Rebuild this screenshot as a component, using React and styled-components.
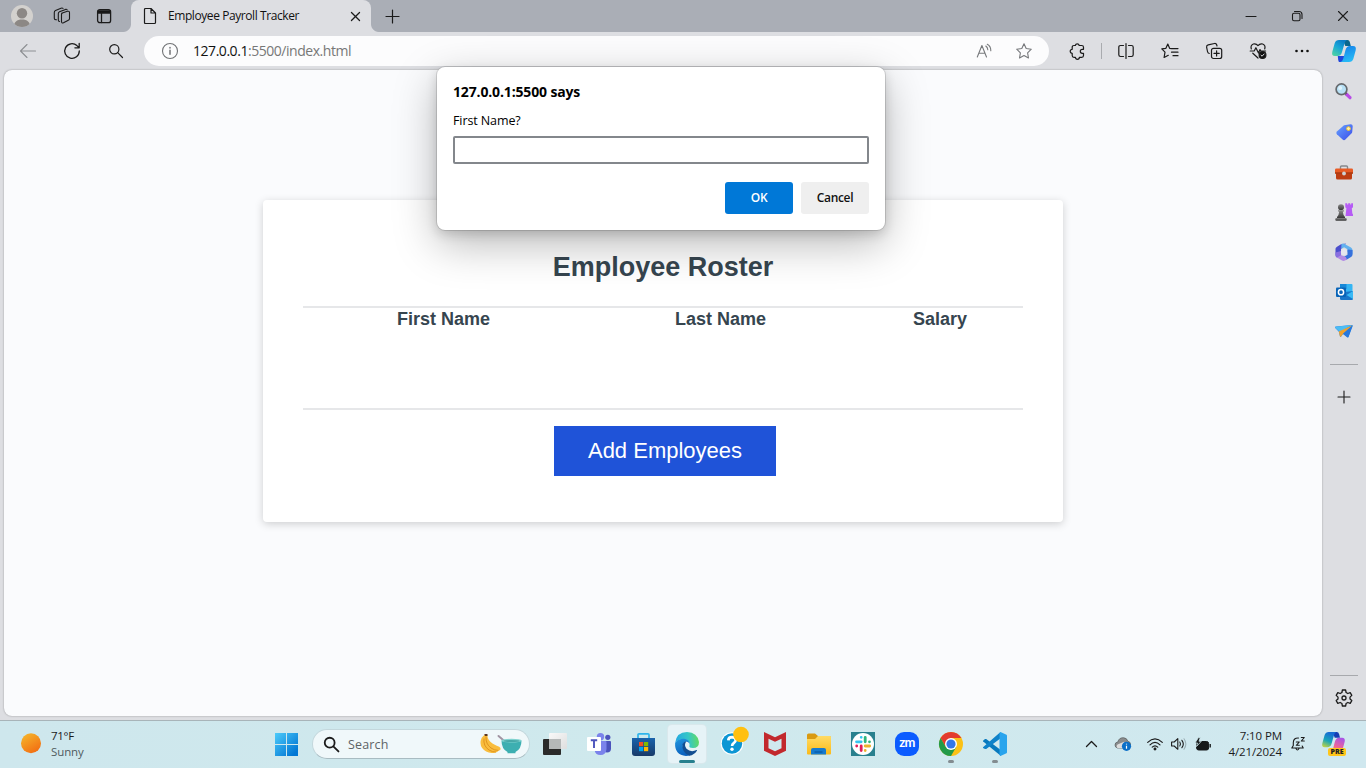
import React from "react";
import styled, { createGlobalStyle, css } from "styled-components";

const GlobalStyle = createGlobalStyle`
  *, *::before, *::after { box-sizing: border-box; }
  body { margin: 0; overflow: hidden; }
  svg { display: block; overflow: visible; }
`;

const ui = `"Open Sans", "Noto Sans", sans-serif`;

const Screen = styled.div`
  width: 1366px;
  height: 768px;
  display: flex;
  flex-direction: column;
  background: #dddee2;
  font-family: ${ui};
  color: #111;
  overflow: hidden;
`;

const Slot = styled.span`
  display: flex;
  flex: none;
  align-items: center;
  justify-content: center;
  width: ${(p) => p.$w || 44}px;
  height: ${(p) => (p.$h ? `${p.$h}px` : "auto")};
`;

const Spacer = styled.span`
  flex: 1;
`;

const Gap = styled.span`
  flex: none;
  width: ${(p) => p.$w || 0}px;
  height: ${(p) => p.$h || 0}px;
`;

/* ---------- tab strip ---------- */

const TabStrip = styled.div`
  display: flex;
  flex: none;
  height: 32px;
  background: #aaaeb6;
`;

const Tab = styled.div`
  position: relative;
  display: flex;
  align-items: center;
  width: 240px;
  height: 32px;
  margin-left: 3px;
  padding: 0 8px 0 13px;
  background: #dddee2;
  border-radius: 8px 8px 0 0;

  &::before,
  &::after {
    content: "";
    position: absolute;
    bottom: 0;
    width: 8px;
    height: 8px;
  }
  &::before {
    left: -8px;
    background: radial-gradient(circle at 0 0, transparent 7.5px, #dddee2 8.5px);
  }
  &::after {
    right: -8px;
    background: radial-gradient(circle at 100% 0, transparent 7.5px, #dddee2 8.5px);
  }
`;

const TabTitle = styled.span`
  flex: 1;
  margin-left: 12px;
  padding-bottom: 1px;
  font-size: 12px;
  letter-spacing: -0.42px;
  white-space: nowrap;
`;

/* ---------- toolbar ---------- */

const Toolbar = styled.div`
  display: flex;
  flex: none;
  height: 38px;
  padding: 0 0 0 6px;
  align-items: stretch;
`;

const AddressBar = styled.div`
  display: flex;
  align-items: center;
  width: 905px;
  height: 30px;
  margin: 4px 6px 0 6px;
  padding: 0 5px 0 14px;
  background: #fcfcfd;
  border-radius: 15px;
`;

const Url = styled.span`
  flex: 1;
  margin-left: 11px;
  padding-bottom: 1px;
  font-size: 14px;
  letter-spacing: -0.46px;
  color: #777;
  b {
    font-weight: 400;
    color: #111;
  }
`;

const ToolDivider = styled.span`
  width: 1px;
  height: 16px;
  margin: 11px 2px 0;
  background: #a9abaf;
`;

/* ---------- page ---------- */

const Body = styled.div`
  display: flex;
  flex: none;
  height: 650px;
  padding-left: 4px;
`;

const Page = styled.main`
  width: 1318px;
  height: 646px;
  padding-top: 130px;
  background: #fafbfd;
  border-radius: 8px;
  box-shadow: 0 0 2px rgba(0, 0, 0, 0.35);
`;

const Card = styled.section`
  display: flex;
  flex-direction: column;
  align-items: center;
  width: 800px;
  height: 322px;
  margin: 0 auto;
  padding: 0 40px;
  background: #fff;
  border-radius: 4px;
  box-shadow: 0 2px 8px rgba(0, 0, 0, 0.18);
  font-family: "Liberation Sans", Arial, sans-serif;
  color: #36454f;
`;

const Heading = styled.h1`
  margin: 51px 0 22px;
  font-size: 27px;
  line-height: 33px;
  font-weight: 700;
`;

const Roster = styled.div`
  display: grid;
  grid-template-columns: 281px 273px 166px;
  width: 720px;
  height: 104px;
  border-top: 2px solid #e6e7e9;
  border-bottom: 2px solid #e6e7e9;
`;

const ColumnTitle = styled.span`
  font-size: 18px;
  line-height: 23px;
  font-weight: 700;
  text-align: center;
`;

const AddButton = styled.button`
  width: 222px;
  height: 50px;
  margin: 16px 0 0 4px;
  padding: 0;
  border: 0;
  background: #1f53d8;
  color: #fff;
  font: 22px "Liberation Sans", Arial, sans-serif;
`;

/* ---------- dialog ---------- */

const Dialog = styled.div`
  position: absolute;
  left: 437px;
  top: 67px;
  width: 448px;
  height: 163px;
  padding: 15px 16px 0;
  background: #fff;
  border-radius: 8px;
  box-shadow: 0 0 0 1px rgba(0, 0, 0, 0.12), 0 14px 44px rgba(0, 0, 0, 0.28), 0 4px 12px rgba(0, 0, 0, 0.16);
  color: #000;
`;

const DialogTitle = styled.div`
  font-size: 14px;
  line-height: 20px;
  font-weight: 700;
  letter-spacing: -0.15px;
`;

const DialogLabel = styled.div`
  margin-top: 9px;
  font-size: 12.5px;
  line-height: 19px;
  letter-spacing: -0.1px;
`;

const PromptInput = styled.input`
  display: block;
  width: 416px;
  height: 28px;
  margin-top: 6px;
  border: 2px solid #83878c;
  border-radius: 2px;
  background: #fff;
  outline: 0;
`;

const DialogActions = styled.div`
  display: flex;
  justify-content: flex-end;
  gap: 8px;
  margin-top: 18px;
`;

const DialogButton = styled.button`
  width: 68px;
  height: 32px;
  padding: 0 0 1px;
  border: 0;
  border-radius: 3px;
  font: 600 12px ${ui};
  letter-spacing: -0.35px;
  background: ${(p) => (p.$primary ? "#0078d7" : "#efefef")};
  color: ${(p) => (p.$primary ? "#fff" : "#111")};
`;

/* ---------- sidebar ---------- */

const Sidebar = styled.aside`
  display: flex;
  flex-direction: column;
  align-items: center;
  width: 44px;
  padding-top: 2px;
`;

const SideDivider = styled.span`
  width: 28px;
  height: 1px;
  background: #a7a9ad;
`;

/* ---------- taskbar ---------- */

const Taskbar = styled.footer`
  display: flex;
  flex: none;
  height: 48px;
  padding-bottom: 1px;
  align-items: center;
  border-top: 1px solid #a8b4b9;
  background: linear-gradient(90deg, #cee7ed, #cfe9ed 50%, #d0e8ef);
`;

const Weather = styled.div`
  display: flex;
  align-items: center;
  width: 262px;
  padding-left: 21px;
`;

const WeatherText = styled.div`
  display: flex;
  flex-direction: column;
  margin-left: 10px;
  font-size: 11.5px;
  line-height: 16px;
  letter-spacing: -0.3px;
  color: #1b1b1b;
  small {
    font-size: 11.5px;
    letter-spacing: -0.1px;
    color: #505a5e;
  }
`;

const SearchBox = styled.div`
  display: flex;
  align-items: center;
  width: 218px;
  height: 30px;
  margin: 0 3px 0 1px;
  padding: 0 7px 0 11px;
  background: #f0f8fa;
  border: 1px solid #c3d7dc;
  border-bottom-color: #a9bcc2;
  border-radius: 15px;
  span {
    flex: 1;
    margin-left: 9px;
    font-size: 12.5px;
    letter-spacing: 0.15px;
    color: #5e6366;
  }
`;

const TaskItem = styled.span`
  position: relative;
  display: flex;
  align-items: center;
  justify-content: center;
  width: 38px;
  height: 38px;
  margin: 0 3px;
  border-radius: 4px;
  ${(p) =>
    p.$active &&
    css`
      background: #e6f3f7;
      box-shadow: 0 0 0 1px #d9e8ec;
    `}
  &::after {
    content: "";
    position: absolute;
    bottom: 0;
    left: 50%;
    width: ${(p) => (p.$active ? 16 : 6)}px;
    height: 3px;
    border-radius: 2px;
    transform: translateX(-50%);
    background: ${(p) => (p.$active ? "#26808e" : p.$running ? "#838c90" : "transparent")};
  }
`;

const Clock = styled.div`
  width: 63px;
  font-size: 11.5px;
  line-height: 16px;
  letter-spacing: -0.1px;
  white-space: nowrap;
  text-align: right;
  color: #1b1b1b;
`;

/* ---------- icons ---------- */

const Line = ({ w = 16, h = w, box, c = "#1b1b1b", s = 1.1, children }) => (
  <svg
    width={w}
    height={h}
    viewBox={box || `0 0 ${w} ${h}`}
    fill="none"
    stroke={c}
    strokeWidth={s}
    strokeLinecap="round"
    strokeLinejoin="round"
  >
    {children}
  </svg>
);

const Avatar = () => (
  <svg width="22" height="22" viewBox="0 0 22 22">
    <clipPath id="av"><circle cx="11" cy="11" r="11" /></clipPath>
    <g clipPath="url(#av)">
      <rect width="22" height="22" fill="#d3d1ce" />
      <circle cx="11" cy="8.2" r="5.2" fill="#8c8885" />
      <path d="M2.8 22c0-5 3-7.6 8.2-7.6s8.2 2.6 8.2 7.6z" fill="#8c8885" />
    </g>
  </svg>
);

const Workspaces = () => (
  <Line w={18}>
    <path d="M8.6 6.2 14.4 4.3Q16.5 3.8 16.5 5.8v5.6q0 1.3-1.2 1.8l-4.8 2.6q-2 .8-2-1.2V7.600q0-1.100 1-1.600z" />
    <path d="M6.600 14.500q-1.300-.1-1.300-1.600V6.700q0-1.400 1.200-1.900l6-2.400q1.200-.3 1.600.4" />
    <path d="M3.500 12.800q-2 .2-2.200-1.400V5.400Q1.300 4 2.500 3.400L8 1.200q1.400-.4 2 .2" />
  </Line>
);

const VerticalTabs = () => (
  <Line w={14} s={1.3}>
    <rect x=".6" y=".6" width="13" height="13" rx="2.200" />
    <path d="M1 1.800h12v2.200H1z" fill="#111" />
    <path d="M4.500 4v9.500" />
  </Line>
);

const FileIcon = () => (
  <Line w={12} h={16} s={1.2}>
    <path d="M.5 1.500q0-1 1-1H7l4.500 4.500v9.500q0 1-1 1h-9q-1 0-1-1zM7 .5V5h4.500" />
  </Line>
);

const Cross = ({ w = 9, s = 1.2 }) => (
  <Line w={w} box="0 0 10 10" s={s}><path d="m.5.5 9 9M9.500.5l-9 9" /></Line>
);

const Plus = ({ w = 13 }) => (
  <Line w={w} box="0 0 13 13" s={1.2}><path d="M6.500 0v13M0 6.500h13" /></Line>
);

const Minimise = () => <Line w={10} s={1.1}><path d="M0 5.500h10" /></Line>;

const Restore = () => (
  <Line w={10} s={1.1}>
    <rect x=".5" y="2.200" width="7.500" height="7.500" rx="1.500" />
    <path d="M2.500.5h4.500q3 0 3 3v4" />
  </Line>
);

const Back = () => <Line w={16} h={14} c="#8d8f93"><path d="M15.500 7H.5M7 .5.500 7 7 13.500" /></Line>;

const Refresh = () => (
  <Line w={16} s={1.3}>
    <path d="M15.300 8a7.300 7.300 0 1 1-2.400-5.400L15 4.600M15.200.5v4.300h-4.300" />
  </Line>
);

const Magnifier = ({ w = 14, s = 1.2 }) => (
  <Line w={w} box="0 0 14 14" s={s}><circle cx="5.300" cy="5.300" r="4.600" /><path d="m8.700 8.700 4.800 4.800" /></Line>
);

const Info = () => (
  <Line w={16} c="#707275"><circle cx="8" cy="8" r="7.500" /><path d="M8 7.300v4M8 4.600v.3" strokeWidth="1.500" /></Line>
);

const ReadAloud = () => (
  <Line w={16} c="#77797c">
    <path d="m1.300 14 4.600-11.500L10.500 14M2.900 10.300h6" />
    <path d="M9.800 3q1.900 1.400 2 3.700M11.300 1.300q3.600 2 3.500 6.500" />
  </Line>
);

const starPath = "m8 .8 2.200 4.700 5.100.7-3.700 3.600.9 5.200L8 12.500 3.500 15l.9-5.200L.7 6.200l5.100-.7z";
const Star = () => <Line w={16} c="#77797c"><path d={starPath} /></Line>;

const Puzzle = () => (
  <Line w={16} s={1.2}>
    <path d="M3.200 4.300q0-1.800 1.800-1.800h1.300a2 2 0 0 1 3.900 0h2.500q1.800 0 1.800 1.800v2h-1.200a2 2 0 0 0 0 4h1.200v2.200q0 1.800-1.800 1.800h-2.300a2 2 0 0 1-4 0H5q-1.800 0-1.800-1.800v-2.200a2 2 0 0 1 0-4z" />
  </Line>
);

const Split = () => (
  <Line w={16} s={1.2}>
    <path d="M8 .5v15M5.500 2.500h-3q-1.700 0-1.700 1.700v7.600q0 1.700 1.700 1.700h3M10.500 2.500h3q1.700 0 1.700 1.700v7.600q0 1.700-1.700 1.700h-3" />
  </Line>
);

const Favourites = () => (
  <Line w={16} s={1.2}>
    <path d="M9.700 5.600 7.600 5.300 5.800 1 3.900 5.300-.2 5.900l3.200 3.200-.9 5.400 4.200-2.200M9.700 5.600H16M9.500 9.200H16M11 12.700h5" />
  </Line>
);

const Collections = () => (
  <Line w={16} s={1.2}>
    <rect x="5.500" y="5.300" width="10.200" height="10.200" rx="2" />
    <path d="M10.600 7.800v5.200M8 10.400h5.200M3.300 10.500Q1.800 10.200 1.500 8.500L.600 4.200Q.400 2.300 2.200 1.800L8.500.5q1.700-.2 2.200 1.300l.3 1.200" />
  </Line>
);

const HeartPulse = () => (
  <Line w={17} h={16} s={1.2}>
    <path d="M1.300 6Q.2 2.200 3.300 1q2.800-.8 4.700 1.600Q10 .2 12.700 1q3.200 1.200 2 5" />
    <path d="M.2 8h4l1.700-3.300L8.500 10l1.500-3.500.8 1.500h4.800M2.800 10.200 8 15" />
    <circle cx="12.500" cy="12" r="3.400" fill="#111" />
    <path d="m11 12.200 1.100 1 2-2.200" stroke="#dddee2" strokeWidth="1" />
  </Line>
);

const Dots = () => (
  <svg width="14" height="4" viewBox="0 0 14 4" fill="#111">
    <circle cx="1.500" cy="2" r="1.300" /><circle cx="7" cy="2" r="1.300" /><circle cx="12.500" cy="2" r="1.300" />
  </svg>
);

const Copilot = () => (
  <svg width="24" height="22" viewBox="0 0 24 22">
    <defs>
      <linearGradient id="cp1" x1="0" y1="1" x2=".6" y2="0"><stop offset="0" stopColor="#55d99b" /><stop offset=".6" stopColor="#17a5d8" /><stop offset="1" stopColor="#0c7dc6" /></linearGradient>
      <linearGradient id="cp2" x1="0" y1="0" x2=".3" y2="1"><stop offset="0" stopColor="#147fe9" /><stop offset="1" stopColor="#27b9f5" /></linearGradient>
    </defs>
    <path d="M11 0h4.500q1.800 0 2.300 2l1 4h-5.500z" fill="#0a668c" />
    <path d="M7 22h4.500l2-6H5.800l.4 3.800Q6.500 21.500 7 22z" fill="#2146db" />
    <path d="M7 0h8q-1.800.6-2.500 3.500L10 12q-1 4-4.500 4H2.800Q-.7 16 .3 11.700l2.400-8.500Q3.800 0 7 0z" fill="url(#cp1)" />
    <path d="M18 6h3q3.600 0 2.700 4.300L21.300 19q-1 3-4.300 3H8.500q2-.5 2.800-3.500L13.500 10Q14.500 6 18 6z" fill="url(#cp2)" />
  </svg>
);

const SideSearch = () => (
  <svg width="18" height="18" viewBox="0 0 18 18">
    <path d="m11.300 11 3.700 3.700" stroke="#b84be6" strokeWidth="3.200" strokeLinecap="round" />
    <path d="m9.800 9.500 1.500 1.500" stroke="#555" strokeWidth="2" />
    <circle cx="6.500" cy="6.300" r="5.400" fill="#b7e0f5" stroke="#66696d" strokeWidth="1.700" />
    <circle cx="5.200" cy="5" r="2" fill="#dff3fc" />
  </svg>
);

const Tag = () => (
  <svg width="17" height="17" viewBox="0 0 17 17">
    <defs><linearGradient id="tg" x1="0" y1="0" x2="1" y2="1"><stop stopColor="#68a4ff" /><stop offset="1" stopColor="#3a4be8" /></linearGradient></defs>
    <path d="M8 1.200 14.500.2q2-.2 2.200 1.700l-.5 6q-.1 1-.8 1.700l-6 6q-1.400 1.300-2.800 0L.9 10.200q-1.300-1.400 0-2.800z" fill="url(#tg)" />
    <circle cx="12.500" cy="4.600" r="1.900" fill="#fff3b0" stroke="#f1c232" strokeWidth="1" />
  </svg>
);

const Toolbox = () => (
  <svg width="18" height="15" viewBox="0 0 18 15">
    <path d="M5.500 4V2q0-1 1-1h5q1 0 1 1v2" fill="none" stroke="#85888c" strokeWidth="1.400" />
    <rect y="3.500" width="18" height="5.500" rx="1.300" fill="#e85b25" />
    <path d="M1 8.500h16V13q0 1.500-1.500 1.500h-13Q1 14.500 1 13z" fill="#bd3d12" />
    <path d="M0 8h18" stroke="#8c2d0b" />
    <circle cx="9" cy="8.500" r="1.900" fill="#cfd2d5" />
  </svg>
);

const Chess = () => (
  <svg width="18" height="18" viewBox="0 0 18 18">
    <defs><linearGradient id="ch" x1="0" y1="0" x2="0" y2="1"><stop stopColor="#888" /><stop offset="1" stopColor="#333" /></linearGradient></defs>
    <path d="M10.300.3h1.900v1.200h1V.3h2v1.200h1V.3H18v4l-1.200 1 .5 5 .7 1.200v1.500h-7.500l.9-7.700-1.100-1z" fill="#b65bf5" />
    <g fill="url(#ch)">
      <circle cx="6" cy="4.300" r="3" />
      <path d="M3 7.300h6v1.300H7.800Q8 12 10 14v1.500H2V14q2-2 2.200-5.400H3z" />
      <rect x=".3" y="15" width="11.400" height="2.800" rx="1" />
    </g>
  </svg>
);

const M365 = () => (
  <svg width="18" height="18" viewBox="0 0 18 18">
    <path d="M6 1.300 11 .5 8.500 4 6 6v6L2 14.500Q.5 13.500.5 12V5.800Q.5 4.500 2 3.700z" fill="#4c4fcc" />
    <path d="M6.500.9q1.500-.9 3 0l6.500 3.700q1.500 1 1.500 2.600v4L12.500 9V6.200L9 4.300 6.200 6z" fill="#62b1ef" />
    <path d="M17.500 7v4.500q0 1.700-1.500 2.600l-4.500 2.700-6-2.800 3.500-.3 3.500-2V6.500z" fill="#3671dc" />
    <path d="M1.500 14.200 5.800 12l5 2 1.200 2.500-2 1q-1.500.8-3 0z" fill="#b28be5" />
    <path d="M.5 9.500 6 8v4.200L2 14.500Q.5 13.500.5 12z" fill="#8a6fe0" />
    <circle cx="9" cy="9" r="3.100" fill="#e6e7ee" />
  </svg>
);

const Outlook = () => (
  <svg width="17" height="16" viewBox="0 0 17 16">
    <rect x="4" width="12.500" height="11" rx="1" fill="#35b5f3" />
    <path d="M4 0h6.500v5H4z" fill="#1688d8" />
    <path d="M4 8.500 17 7v7.700q0 1.300-1.300 1.300H5.300Q4 16 4 14.700z" fill="#1976c9" />
    <path d="M17 7v8l-6.500-4z" fill="#38b9f5" />
    <rect y="3.500" width="10" height="9.500" rx="1" fill="#0864b8" />
    <circle cx="5" cy="8.200" r="2.600" fill="none" stroke="#fff" strokeWidth="1.500" />
  </svg>
);

const Plane = () => (
  <svg width="18" height="14" viewBox="0 0 18 14">
    <path d="M0 2.500Q0 1.500 1 1.400L17 0q1 .1.700 1L13.500 12q-.6 1-1.500.3L8 9l-2 2.700q-.7.500-1-.3L3.800 6.800.3 3z" fill="#2384e8" />
    <path d="M.3 1.700 17 0 5 7 .3 3z" fill="#4cbdf4" />
    <path d="M17.500.3 3.800 6.500 5 11.500q.4.900 1 0L8 9z" fill="#f0a22d" />
    <path d="M17.500.5 8 8.800l4.700 3.500q.5.200.8-.5z" fill="#2878dc" />
  </svg>
);

const Gear = () => (
  <Line w={18} box="0 0 18 18" s={1.3}>
    <path d="M7.400 1h3.200l.5 2.500 1.700 1 2.400-.8 1.600 2.700L15 8.100v1.900l1.800 1.600-1.600 2.700-2.400-.8-1.700 1-.5 2.500H7.400l-.5-2.500-1.700-1-2.400.8-1.600-2.700L3 10V8.100L1.200 6.400l1.600-2.700 2.400.8 1.700-1z" />
    <circle cx="9" cy="9" r="2" />
  </Line>
);

const Sun = () => (
  <svg width="20" height="20" viewBox="0 0 20 20">
    <defs><linearGradient id="sun" x1=".2" y1="0" x2=".8" y2="1"><stop stopColor="#f5b52c" /><stop offset="1" stopColor="#f26a11" /></linearGradient></defs>
    <circle cx="10" cy="9.200" r="10" fill="url(#sun)" />
  </svg>
);

const Windows = () => (
  <svg width="23" height="23" viewBox="0 0 23 23">
    <defs><linearGradient id="win" gradientUnits="userSpaceOnUse" x1="0" y1="0" x2="20" y2="20"><stop stopColor="#4dcbfa" /><stop offset="1" stopColor="#0277d4" /></linearGradient></defs>
    <path fill="url(#win)" d="M0 0h11v11H0zM12 0h11v11H12zM0 12h11v11H0zM12 12h11v11H12z" />
  </svg>
);

const BananaBowl = () => (
  <svg width="42" height="20" viewBox="0 0 42 20">
    <path d="M4.300 1h3q.4 5.500 5.200 8.500 4 2.300 6.700 3.200 2 1.200 1.200 3-.5.800-1.800.7-2 2.600-7 2.600-6-.4-9.500-5-3-4.500-.4-10.300z" fill="#f9bd3d" />
    <path d="M6 2.500q-.5 7.500 5 11.500 3.500 2.500 7.500 2.400M4 4.500q-1 7.500 5 11.500 3.500 2.200 7 2" stroke="#d98914" fill="none" strokeWidth=".8" />
    <path d="M4.300 0h3.200v2H5z" fill="#5c3821" />
    <path d="m18.500 2 7 6" stroke="#a194a3" strokeWidth="2" strokeLinecap="round" />
    <path d="M21.500 6.500h20q0 8.500-6 11.500v1.200h-8V18q-6-3-6-11.500z" fill="#3dafb1" />
    <ellipse cx="31.500" cy="6.700" rx="10" ry="1.900" fill="#81d3d0" />
    <ellipse cx="31.500" cy="7" rx="8" ry="1" fill="#46a8a8" />
  </svg>
);

const TaskView = () => (
  <svg width="24" height="22" viewBox="0 0 24 22">
    <defs><linearGradient id="tv" x1="0" y1="0" x2="1" y2="1"><stop stopColor="#f9f9f9" /><stop offset="1" stopColor="#dedede" /></linearGradient></defs>
    <rect y="6" width="18" height="16" rx="1" fill="#2b2b2a" />
    <rect x="6" width="18" height="16" rx="1" fill="url(#tv)" />
    <path d="M6 6h12v10H6z" fill="#b5b8b8" />
  </svg>
);

const Teams = () => (
  <svg width="24" height="22" viewBox="0 0 24 22">
    <circle cx="20.800" cy="4.300" r="2.600" fill="#4b53bc" />
    <circle cx="13.500" cy="3.700" r="3.700" fill="#7b83eb" />
    <path d="M17 8h6q1 0 1 1v6.500q0 4-4 4-3 0-3-3z" fill="#4b53bc" />
    <path d="M8 8h10.500q1 0 1 1v7q-.5 6-6 6T7.500 16.500z" fill="#7b83eb" />
    <rect y="4" width="14" height="14" rx="1" fill="#fff" />
    <path d="M3.800 7.300h6.400M7 7.300v7.700" stroke="#4b53bc" strokeWidth="1.900" />
  </svg>
);

const Store = () => (
  <svg width="23" height="23" viewBox="0 0 23 23">
    <defs><linearGradient id="st" x1="0" y1="0" x2="0" y2="1"><stop stopColor="#1a63ac" /><stop offset="1" stopColor="#183a68" /></linearGradient></defs>
    <path d="M6 5.500V1.800q0-1 1-1h9q1 0 1 1v3.700" fill="none" stroke="#2fb5ec" strokeWidth="1.700" />
    <path d="M0 5h23v15q0 3-3 3H3q-3 0-3-3z" fill="url(#st)" />
    <path fill="#f25022" d="M7 9h4.200v4.200H7z" /><path fill="#7fba00" d="M12 9h4.200v4.200H12z" />
    <path fill="#00a4ef" d="M7 14h4.200v4.200H7z" /><path fill="#ffb900" d="M12 14h4.200v4.200H12z" />
  </svg>
);

const Edge = () => (
  <svg width="24" height="24" viewBox="0 0 24 24">
    <defs>
      <linearGradient id="eg1" x1="0" y1=".3" x2="1" y2=".2"><stop stopColor="#25a8e2" /><stop offset=".55" stopColor="#35c7c6" /><stop offset="1" stopColor="#65dc5b" /></linearGradient>
      <linearGradient id="eg2" x1="0" y1="0" x2=".3" y2="1"><stop stopColor="#2196df" /><stop offset="1" stopColor="#0b62bf" /></linearGradient>
    </defs>
    <path d="M.1 11Q1.500 0 12 0q10.500.5 12 10 0 6-6 6-4.500 0-3.500-2.500 1-5-5-6.500Q4 6.500.1 11z" fill="url(#eg1)" />
    <path d="M.1 11Q3.500 6.500 9 6.800q5.500.7 5.700 5.200-1-2.500-3.700-2.500-4 1.500-3 6 2 5.500 7 7.800-2 .7-4 .7Q-.5 23 .1 11z" fill="url(#eg2)" />
    <path d="M7.500 12q2-3 4-2.700-3 3.700 0 7.500 4.500 4 10 1.200.8-.2.400.7-2.700 4.200-7.500 5Q6.500 20.500 7.500 12z" fill="#124e91" />
  </svg>
);

const HelpBadge = () => (
  <svg width="28" height="28" viewBox="-4 3 28 28">
    <circle cx="11" cy="16.500" r="11.300" fill="#fff" />
    <circle cx="11" cy="16.500" r="10.200" fill="#0d96d4" />
    <path d="M7.300 13.300q.2-3.200 3.700-3.200 3.700.1 3.700 3 0 1.700-2 3-1.600 1-1.600 2.800" fill="none" stroke="#fff" strokeWidth="2.700" />
    <circle cx="11" cy="22.200" r="1.700" fill="#fff" />
    <circle cx="20" cy="7.500" r="7.800" fill="#ffc010" />
  </svg>
);

const McAfee = () => (
  <svg width="22" height="24" viewBox="0 0 22 24">
    <path d="m0 0 11 5.200L22 0v18.800L11 24 0 18.800z" fill="#c2282d" />
    <path d="m4.500 6.700 6.500 3.100 6.500-3.100v9.500L11 19.300l-6.500-3.100z" fill="#d0e9ef" />
  </svg>
);

const Folder = () => (
  <svg width="24" height="22" viewBox="0 0 24 22">
    <defs><linearGradient id="fd" x1="0" y1="0" x2="0" y2="1"><stop stopColor="#ffdb65" /><stop offset="1" stopColor="#fbba18" /></linearGradient></defs>
    <path d="M0 2Q0 .5 1.500.5H8l3 2.500h11.500Q24 3 24 4.500V8H0z" fill="#d99a12" />
    <path d="M0 6h8l3-3h12q1 0 1 1v16.500q0 1-1 1H1q-1 0-1-1z" fill="url(#fd)" />
    <path d="M4 21.500V17q0-2 2-2h11q2 0 2 2v4.500z" fill="#167bce" />
    <path d="M7.500 19h8" stroke="#0a5aa5" strokeWidth="1.300" />
  </svg>
);

const Slack = () => (
  <svg width="24" height="24" viewBox="0 0 24 24">
    <rect width="24" height="24" fill="#28808e" />
    <circle cx="12" cy="12" r="11" fill="#fff" />
    <g fill="none" strokeWidth="2.800" strokeLinecap="round">
      <path d="M10.200 5.300v0M5.500 9.800h4.700" stroke="#36c5f0" />
      <path d="M14.200 5.300v4.500M18.500 9.800v0" stroke="#2eb67d" />
      <path d="M14.200 18.500v0M14.200 14h4.500" stroke="#ecb22e" />
      <path d="M10.200 14v4.500M5.700 14v0" stroke="#e01e5a" />
    </g>
  </svg>
);

const ZoomTile = styled.span`
  display: flex;
  justify-content: center;
  width: 24px;
  height: 24px;
  border-radius: 9px;
  background: #0b5cff;
  color: #fff;
  font: 700 13px/21px Lato, sans-serif;
  letter-spacing: -0.7px;
`;

const Chrome = () => (
  <svg width="24" height="24" viewBox="0 0 24 24">
    <circle cx="12" cy="12" r="12" fill="#fbc116" />
    <path d="M1.600 6A12 12 0 0 1 22.400 6H12L6.800 15z" fill="#e33b2e" />
    <path d="M1.600 6A12 12 0 0 0 12 24l5.200-9H6.800z" fill="#229a49" />
    <circle cx="12" cy="12" r="6" fill="#fff" />
    <circle cx="12" cy="12" r="4.600" fill="#3377e8" />
  </svg>
);

const VSCode = () => (
  <svg width="24" height="24" viewBox="0 0 24 24">
    <path d="M0 8.700 2 7.100q.6-.4 1.200 0L18 18.200V24L.2 9.600z" fill="#0879bd" />
    <path d="M0 15.300 17.500 0l.5 6-14.800 10.900q-.6.400-1.200 0L0 15.900z" fill="#0f82c9" />
    <path d="m17.500 0 6 2.700q.5.300.5 1v16.600q0 .7-.5 1l-6 2.700-1-1V1z" fill="#29a4ed" />
  </svg>
);

const Chevron = () => <Line w={11} h={6} s={1.3}><path d="M.5 5.500 5.500.5l5 5" /></Line>;

const Cloud = () => (
  <svg width="16" height="14" viewBox="0 0 16 14">
    <path d="M2.500 11Q0 10.500 0 8q0-2.700 2.800-3Q4 .5 8.500.7q3.500.3 4.300 3.500Q16 5 15.500 8l-5 3z" fill="#8a8c8d" stroke="#565a5c" strokeWidth=".7" />
    <path d="M2.500 11Q.700 9.500 2.500 7.500L9 4.800l3 1.500-3 4.700z" fill="#ddd" />
    <circle cx="11.500" cy="9.300" r="4.600" fill="#0b6fc8" />
    <path d="M11.500 8.700v3M11.500 6.700v.9" stroke="#fff" strokeWidth="1.200" />
  </svg>
);

const Wifi = () => (
  <Line w={16} h={12} s={1.15}>
    <path d="M.7 4.300q7.300-7 14.600 0M3 6.800q5-4.800 10 0M5.200 9.200q2.800-2.700 5.600 0" />
    <circle cx="8" cy="11" r=".9" fill="#111" />
  </Line>
);

const Speaker = () => (
  <Line w={16} h={12} s={1.1}>
    <path d="M.6 4h2.600L6.800.7v10.600L3.200 8H.600z" /><path d="M8.800 4q1.400 2 0 4M10.900 2.300q2.800 3.700 0 7.400" />
    <path d="M13 .8q3.700 5.200 0 10.400" stroke="#9db1b7" />
  </Line>
);

const Battery = () => (
  <svg width="16" height="13" viewBox="0 0 16 13">
    <rect x="1.600" y="3.500" width="12" height="8.500" rx="2" fill="#16191a" stroke="#16191a" />
    <path d="M14.500 6h1.400v3.500h-1.400z" fill="#16191a" />
    <path d="M3.500-.5 0 5h2.500l-1 3.500L6.300 3.300H4L5.300-.5z" fill="#16191a" stroke="#cfe8ee" strokeWidth=".8" />
  </svg>
);

const SnoozeBell = () => (
  <Line w={14} h={14} s={1.1}>
    <path d="M7.500 1Q2.500.7 2.300 5.500v3L.8 11h11.400l-1-2M5 11.500q1.300 3 3 0M5.300 5h3l-3 3.300h3M10.300.5h3L10.300 4h3" />
  </Line>
);

const CopilotWrap = styled.span`
  position: relative;
  width: 24px;
  height: 24px;
`;

const PreBadge = styled.span`
  position: absolute;
  left: 6px;
  bottom: 0;
  width: 18px;
  height: 8px;
  border-radius: 2px;
  background: #ffc61a;
  color: #222;
  font: 800 7px/8px ${ui};
  text-align: center;
`;

const CopilotPre = () => (
  <CopilotWrap>
    <svg width="23" height="21" viewBox="0 0 24 22">
      <defs>
        <linearGradient id="pr1" x1=".4" y1="0" x2="0" y2="1"><stop stopColor="#176bd4" /><stop offset=".5" stopColor="#19a6b9" /><stop offset="1" stopColor="#d9d933" /></linearGradient>
        <linearGradient id="pr2" x1=".7" y1="0" x2=".3" y2="1"><stop stopColor="#a854e6" /><stop offset=".6" stopColor="#f06595" /><stop offset="1" stopColor="#f99b51" /></linearGradient>
      </defs>
      <path d="M11 0h4.500q1.800 0 2.300 2l1 4h-5.500z" fill="#173db4" />
      <path d="M7 0h8q-1.800.6-2.500 3.500L10 12q-1 4-4.500 4H2.800Q-.7 16 .3 11.700l2.400-8.500Q3.800 0 7 0z" fill="url(#pr1)" />
      <path d="M18 6h3q3.600 0 2.700 4.300L21.300 19q-1 3-4.300 3H8.500q2-.5 2.800-3.500L13.500 10Q14.500 6 18 6z" fill="url(#pr2)" />
    </svg>
    <PreBadge>PRE</PreBadge>
  </CopilotWrap>
);

const sideIcons = [SideSearch, Tag, Toolbox, Chess, M365, Outlook, Plane];

export default function App() {
  return (
    <Screen>
      <GlobalStyle />
      <TabStrip>
        <Slot><Avatar /></Slot>
        <Slot $w={36}><Workspaces /></Slot>
        <Slot $w={48}><VerticalTabs /></Slot>
        <Tab>
          <FileIcon />
          <TabTitle>Employee Payroll Tracker</TabTitle>
          <Slot $w={15}><Cross s={1.400} /></Slot>
        </Tab>
        <Slot $w={43}><Plus /></Slot>
        <Spacer />
        <Slot $w={46}><Minimise /></Slot>
        <Slot $w={46}><Restore /></Slot>
        <Slot $w={46}><Cross w={10} s={1.100} /></Slot>
      </TabStrip>

      <Toolbar>
        <Slot><Back /></Slot>
        <Slot><Refresh /></Slot>
        <Slot><Magnifier /></Slot>
        <AddressBar>
          <Slot $w={24}><Info /></Slot>
          <Url><b>127.0.0.1</b>:5500/index.html</Url>
          <Slot $w={40}><ReadAloud /></Slot>
          <Slot $w={40}><Star /></Slot>
        </AddressBar>
        <Slot><Puzzle /></Slot>
        <ToolDivider />
        <Slot><Split /></Slot>
        <Slot><Favourites /></Slot>
        <Slot><Collections /></Slot>
        <Slot><HeartPulse /></Slot>
        <Slot><Dots /></Slot>
        <Slot $w={40}><Copilot /></Slot>
      </Toolbar>

      <Body>
        <Page>
          <Card>
            <Heading>Employee Roster</Heading>
            <Roster>
              <ColumnTitle>First Name</ColumnTitle>
              <ColumnTitle>Last Name</ColumnTitle>
              <ColumnTitle>Salary</ColumnTitle>
            </Roster>
            <AddButton>Add Employees</AddButton>
          </Card>
        </Page>
        <Sidebar>
          {sideIcons.map((Icon, i) => (
            <Slot key={i} $h={40}><Icon /></Slot>
          ))}
          <Gap $h={12} />
          <SideDivider />
          <Slot $h={63}><Plus w={12} /></Slot>
          <Spacer />
          <SideDivider />
          <Slot $h={44}><Gear /></Slot>
        </Sidebar>
      </Body>

      <Taskbar>
        <Weather>
          <Sun />
          <WeatherText>71°F<small>Sunny</small></WeatherText>
        </Weather>
        <Slot $w={49}><Windows /></Slot>
        <SearchBox>
          <Magnifier w={15} s={1.700} />
          <span>Search</span>
          <BananaBowl />
        </SearchBox>
        <TaskItem><TaskView /></TaskItem>
        <TaskItem><Teams /></TaskItem>
        <TaskItem><Store /></TaskItem>
        <TaskItem $active><Edge /></TaskItem>
        <TaskItem><HelpBadge /></TaskItem>
        <TaskItem><McAfee /></TaskItem>
        <TaskItem><Folder /></TaskItem>
        <TaskItem><Slack /></TaskItem>
        <TaskItem><ZoomTile>zm</ZoomTile></TaskItem>
        <TaskItem $running><Chrome /></TaskItem>
        <TaskItem $running><VSCode /></TaskItem>
        <Spacer />
        <Slot $w={32}><Chevron /></Slot>
        <Slot $w={32}><Cloud /></Slot>
        <Slot $w={32}><Wifi /></Slot>
        <Slot $w={16}><Speaker /></Slot>
        <Slot $w={32}><Battery /></Slot>
        <Clock>7:10 PM<br />4/21/2024</Clock>
        <Slot $w={32}><SnoozeBell /></Slot>
        <Slot $w={40}><CopilotPre /></Slot>
        <Gap $w={12} />
      </Taskbar>

      <Dialog>
        <DialogTitle>127.0.0.1:5500 says</DialogTitle>
        <DialogLabel>First Name?</DialogLabel>
        <PromptInput />
        <DialogActions>
          <DialogButton $primary>OK</DialogButton>
          <DialogButton>Cancel</DialogButton>
        </DialogActions>
      </Dialog>
    </Screen>
  );
}
